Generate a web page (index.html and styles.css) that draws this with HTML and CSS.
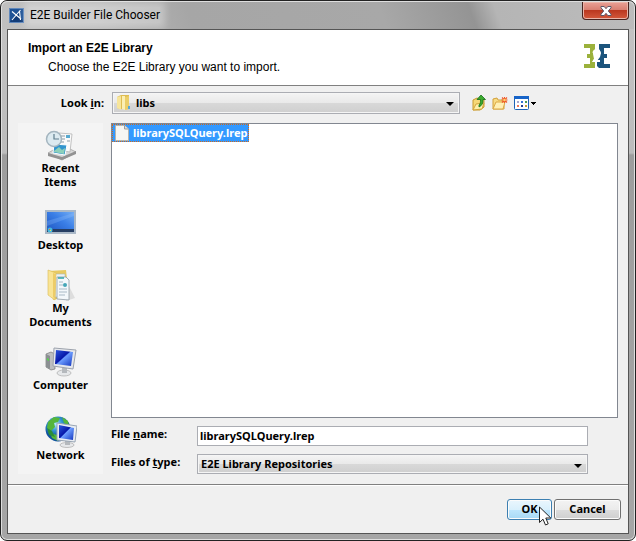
FILE: index.html
```html
<!DOCTYPE html>
<html lang="en">
<head>
  <meta charset="UTF-8" />
  <meta name="viewport" content="width=device-width, initial-scale=1.0" />
  <title>E2E Builder File Chooser</title>
  <link rel="stylesheet" href="styles.css">
</head>
<body>
  <div class="window">
    <div class="titlebar">
      <svg class="app-icon" width="15" height="15" viewBox="0 0 15 15">
        <rect width="15" height="15" fill="#1f5396" />
        <path d="M0 15L9 5l6 10z" fill="#123c78" />
        <path d="M3 3.500L12 11M11.500 2L3 12M10.500 3l1 9" stroke="#fff" stroke-width="1.1" fill="none" />
        <rect x=".5" y=".5" width="14" height="14" fill="none" stroke="#5f87bb" />
      </svg>
      <span class="title">E2E Builder File Chooser</span>
      <button class="close-button" aria-label="Close">
        <svg width="12" height="10" viewBox="0 0 12 10">
          <path d="M1 .5h3.2L6 2.700 7.800.5H11v1.300L8.300 5 11 8.200v1.300H7.800L6 7.300 4.200 9.500H1V8.200L3.700 5 1 1.800z" fill="#fff" stroke="#5d5868" stroke-width="1" />
        </svg>
      </button>
    </div>

    <div class="content">
      <div class="header">
        <div>
          <h1>Import an E2E Library</h1>
          <p>Choose the E2E Library you want to import.</p>
        </div>
        <svg class="logo" width="26" height="24" viewBox="0 0 26 24">
          <path d="M0 0h11v7H9v3l1 5-2 3h3v6H0v-4h6v-6H3v-4h3V4H0z" fill="#9bb13b" />
          <path d="M26 0H15v5l2 4-1 4-3 4v5l2 2h11v-4h-6v-6h3v-4h-3V4h6z" fill="#1b547c" />
          <path d="M9.500 9c.5-4 6.500-4 6 0-.3 3-4 4-5.500 8h6" fill="none" stroke="#fff" stroke-width="2.200" />
        </svg>
      </div>

      <div class="chooser">
        <div class="look-row">
          <label for="lookIn">Look <u>i</u>n:</label>
          <div class="combo folder-combo">
            <select id="lookIn"><option>libs</option></select>
            <svg class="combo-icon" width="14" height="16" viewBox="0 0 14 16">
              <path d="M0 2l4-2h8v14H3l-3-1z" fill="#dfbd52" />
              <path d="M0 2l4-1v14l-4-2z" fill="#f7e59b" />
              <path d="M5 1h3v14l-3-1z" fill="#fbefb3" />
              <path d="M8 2l4-1v13l-4 1z" fill="#ebce68" />
              <path d="M11 11h2v3h-2z" fill="#58a8d8" />
            </svg>
          </div>
          <div class="tools">
            <button class="tool" aria-label="Up one level">
              <svg width="14" height="16" viewBox="0 0 14 16">
                <path d="M1 5l4-2 2 1h5v8l-4 3H1z" fill="#f6d878" stroke="#c79a2c" />
                <path d="M1 15l3-6 8-1-2 6z" fill="#fdf0ac" stroke="#d4a53c" />
                <path d="M9 0l4.500 4.500H11c0 4-1 6-4 7.500V10c1.500-1 1.500-3 1.500-5.500H5z" fill="#3bab2e" stroke="#17701a" stroke-width=".8" />
              </svg>
            </button>
            <button class="tool" aria-label="Create new folder">
              <svg width="16" height="14" viewBox="0 0 16 14">
                <path d="M1 13V3l4-1 1 2h6v9z" fill="#f8dc85" stroke="#d2a03a" />
                <path d="M1 13l3-7h9l-2 7z" fill="#fff0b5" stroke="#dda944" />
                <path d="M12.500 1v6M9.500 4h6M10 1.500l5 5M15 1.500l-5 5" stroke="#ef5828" stroke-width="1.100" />
                <circle cx="12.500" cy="4" r="1.300" fill="#ffd36b" />
              </svg>
            </button>
            <button class="tool" aria-label="View menu">
              <svg width="23" height="14" viewBox="0 0 23 14">
                <rect x=".5" y=".5" width="14" height="13" rx="1" fill="#fff" stroke="#1d62b5" />
                <path d="M0 0h15v3H0z" fill="#1764c8" />
                <path d="M3 5h2v2H3z" fill="#a8a8cf" /><path d="M7 5h2v2H7z" fill="#3475d8" /><path d="M11 5h2v2h-2z" fill="#4b9b50" />
                <path d="M3 9h2v2H3z" fill="#ef7959" /><path d="M7 9h2v2H7z" fill="#27408f" /><path d="M11 9h2v2h-2z" fill="#c69b2f" />
                <path d="M17 6h5v1h-1v1h-1v1h-1V8h-1V7h-1z" fill="#000" />
              </svg>
            </button>
          </div>
        </div>

        <div class="places">
          <button class="place">
            <svg width="32" height="32" viewBox="0 0 32 32">
              <path d="M3 24l14-8 14 7-14 8z" fill="#d8d8d8" stroke="#999" stroke-width=".7" />
              <path d="M3 24l14 4v3L3 27zM17 28l14-6v3l-14 6z" fill="#929292" />
              <path d="M14 4l13 1-2 18-12-2z" fill="#fafafa" stroke="#aaa" stroke-width=".7" />
              <path d="M16 7h4M16 10h4M22 12h3M16 13h3" stroke="#8b9ba6" />
              <path d="M21 6h4v3h-4z" fill="#58a9cf" />
              <path d="M9 15l13 1-2 10-12-2z" fill="#3295ce" stroke="#fff" />
              <path d="M9 22l5-4 3 3 3-2-1 6-10-2z" fill="#8dd0ba" />
              <circle cx="9" cy="10" r="7.500" fill="#dceaf0" stroke="#a4b5bf" stroke-width="1.500" />
              <path d="M9 5v5h5" fill="none" stroke="#5f7d8e" stroke-width="1.200" />
            </svg>
            <span>Recent Items</span>
          </button>
          <button class="place">
            <svg width="32" height="32" viewBox="0 0 32 32">
              <defs>
                <linearGradient id="desk" x1="0" y1="1" x2="1" y2="0"><stop stop-color="#1c52bd" /><stop offset=".55" stop-color="#3a7ee6" /><stop offset="1" stop-color="#79b2f5" /></linearGradient>
                <linearGradient id="screen" x1="0" y1="0" x2="1" y2="1"><stop stop-color="#2e59df" /><stop offset=".45" stop-color="#0718a9" /><stop offset=".5" stop-color="#6c9dff" /><stop offset="1" stop-color="#1334bd" /></linearGradient>
                <radialGradient id="globe" cx=".4" cy=".3"><stop stop-color="#b9edff" /><stop offset=".5" stop-color="#369bd5" /><stop offset="1" stop-color="#10529f" /></radialGradient>
              </defs>
              <rect x="1" y="5" width="29" height="22" fill="url(#desk)" stroke="#aab8c7" stroke-width="2" />
              <path d="M2 23h27v3H2z" fill="#263e63" />
              <path d="M2 15l27-8v3L2 20z" fill="#9cc8ff" opacity=".25" />
              <circle cx="5" cy="24" r="2.500" fill="#45b9df" />
              <path d="M4 23h1v1H4z" fill="#ef6f33" /><path d="M5 24h1v1H5z" fill="#f0dd52" />
            </svg>
            <span>Desktop</span>
          </button>
          <button class="place">
            <svg width="32" height="32" viewBox="0 0 32 32">
              <path d="M23 15l7 14-9 3z" fill="#ddd" />
              <path d="M3 2l18-1 3 26-16 4z" fill="#e8ca62" />
              <path d="M10 5h10v23H10z" fill="#eef4f5" stroke="#a7b5b8" stroke-width=".6" />
              <path d="M12 8h9l3 3v20l-12-1z" fill="#f3f8fb" stroke="#8f9ca5" stroke-width=".8" />
              <path d="M13 9h6" stroke="#2fa5a8" stroke-width="1.500" />
              <path d="M14 13h4M14 16h4M14 20h8M14 23h8M14 26h6" stroke="#a9bac6" />
              <circle cx="20" cy="16" r="2" fill="#45a7b7" />
              <path d="M3 1l8 3-1 27-7-5z" fill="#f9e494" stroke="#d8bb54" stroke-width=".6" />
              <path d="M8 4l3 1-1 25-2-2z" fill="#edcc67" />
            </svg>
            <span>My Documents</span>
          </button>
          <button class="place">
            <svg width="32" height="32" viewBox="0 0 32 32">
              <path d="M1 8l5-2 4 2v15l-4 1-5-3z" fill="#bcbec0" stroke="#777" stroke-width=".7" />
              <path d="M1 8l4 2v13l-4-2z" fill="#8b8f92" />
              <path d="M2 12l2 1v2l-2-1z" fill="#55d54a" />
              <ellipse cx="19" cy="27" rx="7" ry="3" fill="#e6e8ea" stroke="#aaa" stroke-width=".7" />
              <path d="M17 22h5v5h-5z" fill="#b5b9bd" />
              <path d="M9 2l22 2-3 19-20-3z" fill="#e6e8ec" stroke="#9ca2ac" />
              <path d="M11 4l17 2-2 14-16-2z" fill="url(#screen)" />
            </svg>
            <span>Computer</span>
          </button>
          <button class="place">
            <svg class="network-icon" width="32" height="32" viewBox="0 0 32 32">
              <circle cx="13" cy="13" r="12.500" fill="url(#globe)" />
              <path d="M3 6l6-5 6 1-2 4-4 1 1 4-4 4-4-3zM17 1l6 4 1 5-5-3zM5 17l7 2 1 6-6-3z" fill="#55b63a" />
              <path d="M2 12l5 3 3 6-6-2z" fill="#2b8e38" />
              <ellipse cx="22" cy="29" rx="7" ry="2.500" fill="#e6e8ea" stroke="#aaa" stroke-width=".7" />
              <path d="M20 24h5v5h-5z" fill="#b5b9bd" />
              <path d="M12 7l20 3-2 16-18-2z" fill="#e9edf2" stroke="#98a5b4" />
              <path d="M14 9l15 3-1 12-14-2z" fill="url(#screen)" />
            </svg>
            <span>Network</span>
          </button>
        </div>

        <div class="main">
          <ul class="file-list">
            <li class="file selected">
              <svg width="14" height="16" viewBox="0 0 14 16">
                <path d="M.5.500h9L13.500 4v11.500H.5z" fill="#f6f6f3" stroke="#b5b5ae" />
                <path d="M9.500.5V4h4" fill="#ddd" stroke="#999" />
              </svg>
              <span>librarySQLQuery.lrep</span>
            </li>
          </ul>
          <div class="fields">
            <label for="fileName">File <u>n</u>ame:</label>
            <input type="text" id="fileName" value="librarySQLQuery.lrep" />
            <label for="fileType">Files of <u>t</u>ype:</label>
            <div class="combo">
              <select id="fileType"><option>E2E Library Repositories</option></select>
            </div>
          </div>
        </div>
      </div>

      <div class="footer">
        <button class="button ok-button">OK
          <svg class="cursor" width="13" height="20" viewBox="0 0 13 20">
            <path d="M.5 1v15.500l3.500-3.300 2.500 5.800 2.700-1.200L6.800 12h5z" fill="#fff" stroke="#222" />
          </svg>
        </button>
        <button class="button">Cancel</button>
      </div>
    </div>
  </div>
</body>
</html>
```

FILE: styles.css
```css
* {
  box-sizing: border-box;
}
body {
  margin: 0;
  background-color: #fff;
  font-family: "Noto Sans", Tahoma, sans-serif;
  font-size: 11px;
  font-weight: bold;
  line-height: 14px;
  color: #000;
}
button, input, select {
  font: inherit;
  color: inherit;
  margin: 0;
}
svg {
  display: block;
  flex: none;
}
.window {
  display: flex;
  flex-direction: column;
  min-height: 100vh;
  padding: 0 6px 6px;
  border: 1px solid #222;
  border-radius: 7px;
  background: linear-gradient(#c4c4c4, #bcbcbc 152px, #9d9d9d 154px, #a6a6a6);
  box-shadow: inset 0 0 0 1px #dedede;
}
.titlebar {
  display: flex;
  align-items: flex-start;
  height: 28px;
  margin: 0 -5px;
  padding: 0 5px 0 7px;
  border-top: 1px solid #dedede;
  border-radius: 6px 6px 0 0;
  background: linear-gradient(70deg, #c0c0c0, #bababa 15%, #a6a6a6 30%, #a8a8a8 60%, #949494 74%, #b5b5b5 78%, #bcbcbc);
}
.app-icon {
  margin-top: 6px;
}
.title {
  margin: 5px auto 0 6px;
  font-family: Roboto, "Segoe UI", sans-serif;
  font-size: 12px;
  font-weight: normal;
  line-height: 16px;
  background-color: rgba(255, 255, 255, 0.3);
  box-shadow: 0 0 7px 5px rgba(255, 255, 255, 0.3);
}
.close-button {
  display: flex;
  align-items: center;
  justify-content: center;
  width: 47px;
  height: 18px;
  padding: 0;
  border: 1px solid #4a2420;
  border-top: none;
  border-radius: 0 0 4px 4px;
  background: linear-gradient(#eaa196, #d98072 45%, #bb3820 50%, #d4593c);
  box-shadow: inset 0 0 0 1px #e9b5a9;
}
.content {
  flex: 1;
  display: flex;
  flex-direction: column;
  border: 1px solid #555;
  background-color: #f0f0f0;
}
.header {
  display: flex;
  justify-content: space-between;
  align-items: flex-start;
  height: 56px;
  padding: 10px 18px 0 20px;
  border-bottom: 1px solid #808080;
  background-color: #fff;
  font-family: "Liberation Sans", Arial, sans-serif;
}
h1 {
  margin: 0;
  font-size: 12px;
  line-height: 16px;
}
.header p {
  margin: 4px 0 0 20px;
  font-size: 12px;
  font-weight: normal;
  line-height: 14px;
}
.logo {
  margin-top: 4px;
}
.chooser {
  flex: 1;
  display: grid;
  grid-template-columns: 85px 1fr;
  grid-template-rows: 22px 1fr;
  gap: 9px 8px;
  padding: 6px 10px 10px;
}
.look-row {
  grid-column: 1 / 3;
  display: grid;
  grid-template-columns: 86px 1fr 150px;
  column-gap: 8px;
  align-items: center;
}
.look-row label {
  text-align: right;
}
.combo {
  position: relative;
}
.combo::after {
  content: "";
  position: absolute;
  right: 6px;
  top: 10px;
  border: 4px solid transparent;
  border-top-color: #000;
  border-bottom: none;
  pointer-events: none;
}
select {
  display: block;
  appearance: none;
  width: 100%;
  height: 20px;
  padding: 0 16px 0 3px;
  border: 1px solid #abadb3;
  border-radius: 0;
  background: linear-gradient(#f4f4f4, #e9e9e9 50%, #d8d8d8 52%, #cfcfcf);
  box-shadow: inset 0 0 0 1px #f5f5f5;
}
.folder-combo select {
  height: 22px;
  padding-left: 23px;
}
.combo-icon {
  position: absolute;
  left: 5px;
  top: 3px;
}
.tools {
  display: flex;
  align-items: center;
  gap: 6px;
  padding-left: 4px;
}
.tool {
  padding: 0;
  border: none;
  background: none;
}
.places {
  display: flex;
  flex-direction: column;
  align-items: center;
  gap: 17px;
  padding-top: 6px;
  background-color: #f4f4f4;
}
.place {
  display: flex;
  flex-direction: column;
  align-items: center;
  width: 72px;
  padding: 0;
  border: none;
  background: none;
}
.place span {
  padding: 0 8px;
}
.network-icon {
  margin-top: 7px;
}
.main {
  display: flex;
  flex-direction: column;
  gap: 8px;
}
.file-list {
  flex: 1;
  margin: 0;
  padding: 0;
  border: 1px solid #828790;
  background-color: #fff;
  list-style: none;
}
.file {
  display: flex;
  align-items: center;
  gap: 4px;
  width: fit-content;
  height: 18px;
  padding: 0 1px 0 2px;
}
.selected {
  border: 1px dotted #d0691b;
  background-color: #3399ff;
  color: #fff;
}
.fields {
  display: grid;
  grid-template-columns: 78px 1fr;
  gap: 8px;
  padding-right: 30px;
}
.fields label {
  padding-top: 1px;
}
input {
  width: 100%;
  height: 20px;
  padding: 0 2px 2px;
  border: 1px solid #abadb3;
  background-color: #fff;
}
.footer {
  display: flex;
  justify-content: flex-end;
  gap: 2px;
  height: 49px;
  padding: 14px 7px 0;
  border-top: 1px solid #808080;
  box-shadow: inset 0 1px #fff;
}
.button {
  position: relative;
  width: 67px;
  height: 21px;
  padding: 0 0 2px;
  border: 1px solid #707070;
  border-radius: 3px;
  background: linear-gradient(#f3f3f3, #ebebeb 50%, #dcdcdc 52%, #cfcfcf);
  box-shadow: inset 0 0 0 1px #fbfbfb;
}
.ok-button {
  width: 45px;
  border-color: #3c7fb1;
  background: linear-gradient(#eaf6fd, #d9f0fc 50%, #bee6fd 52%, #a7d9f5);
}
.cursor {
  position: absolute;
  left: 31px;
  top: 6px;
}
```
